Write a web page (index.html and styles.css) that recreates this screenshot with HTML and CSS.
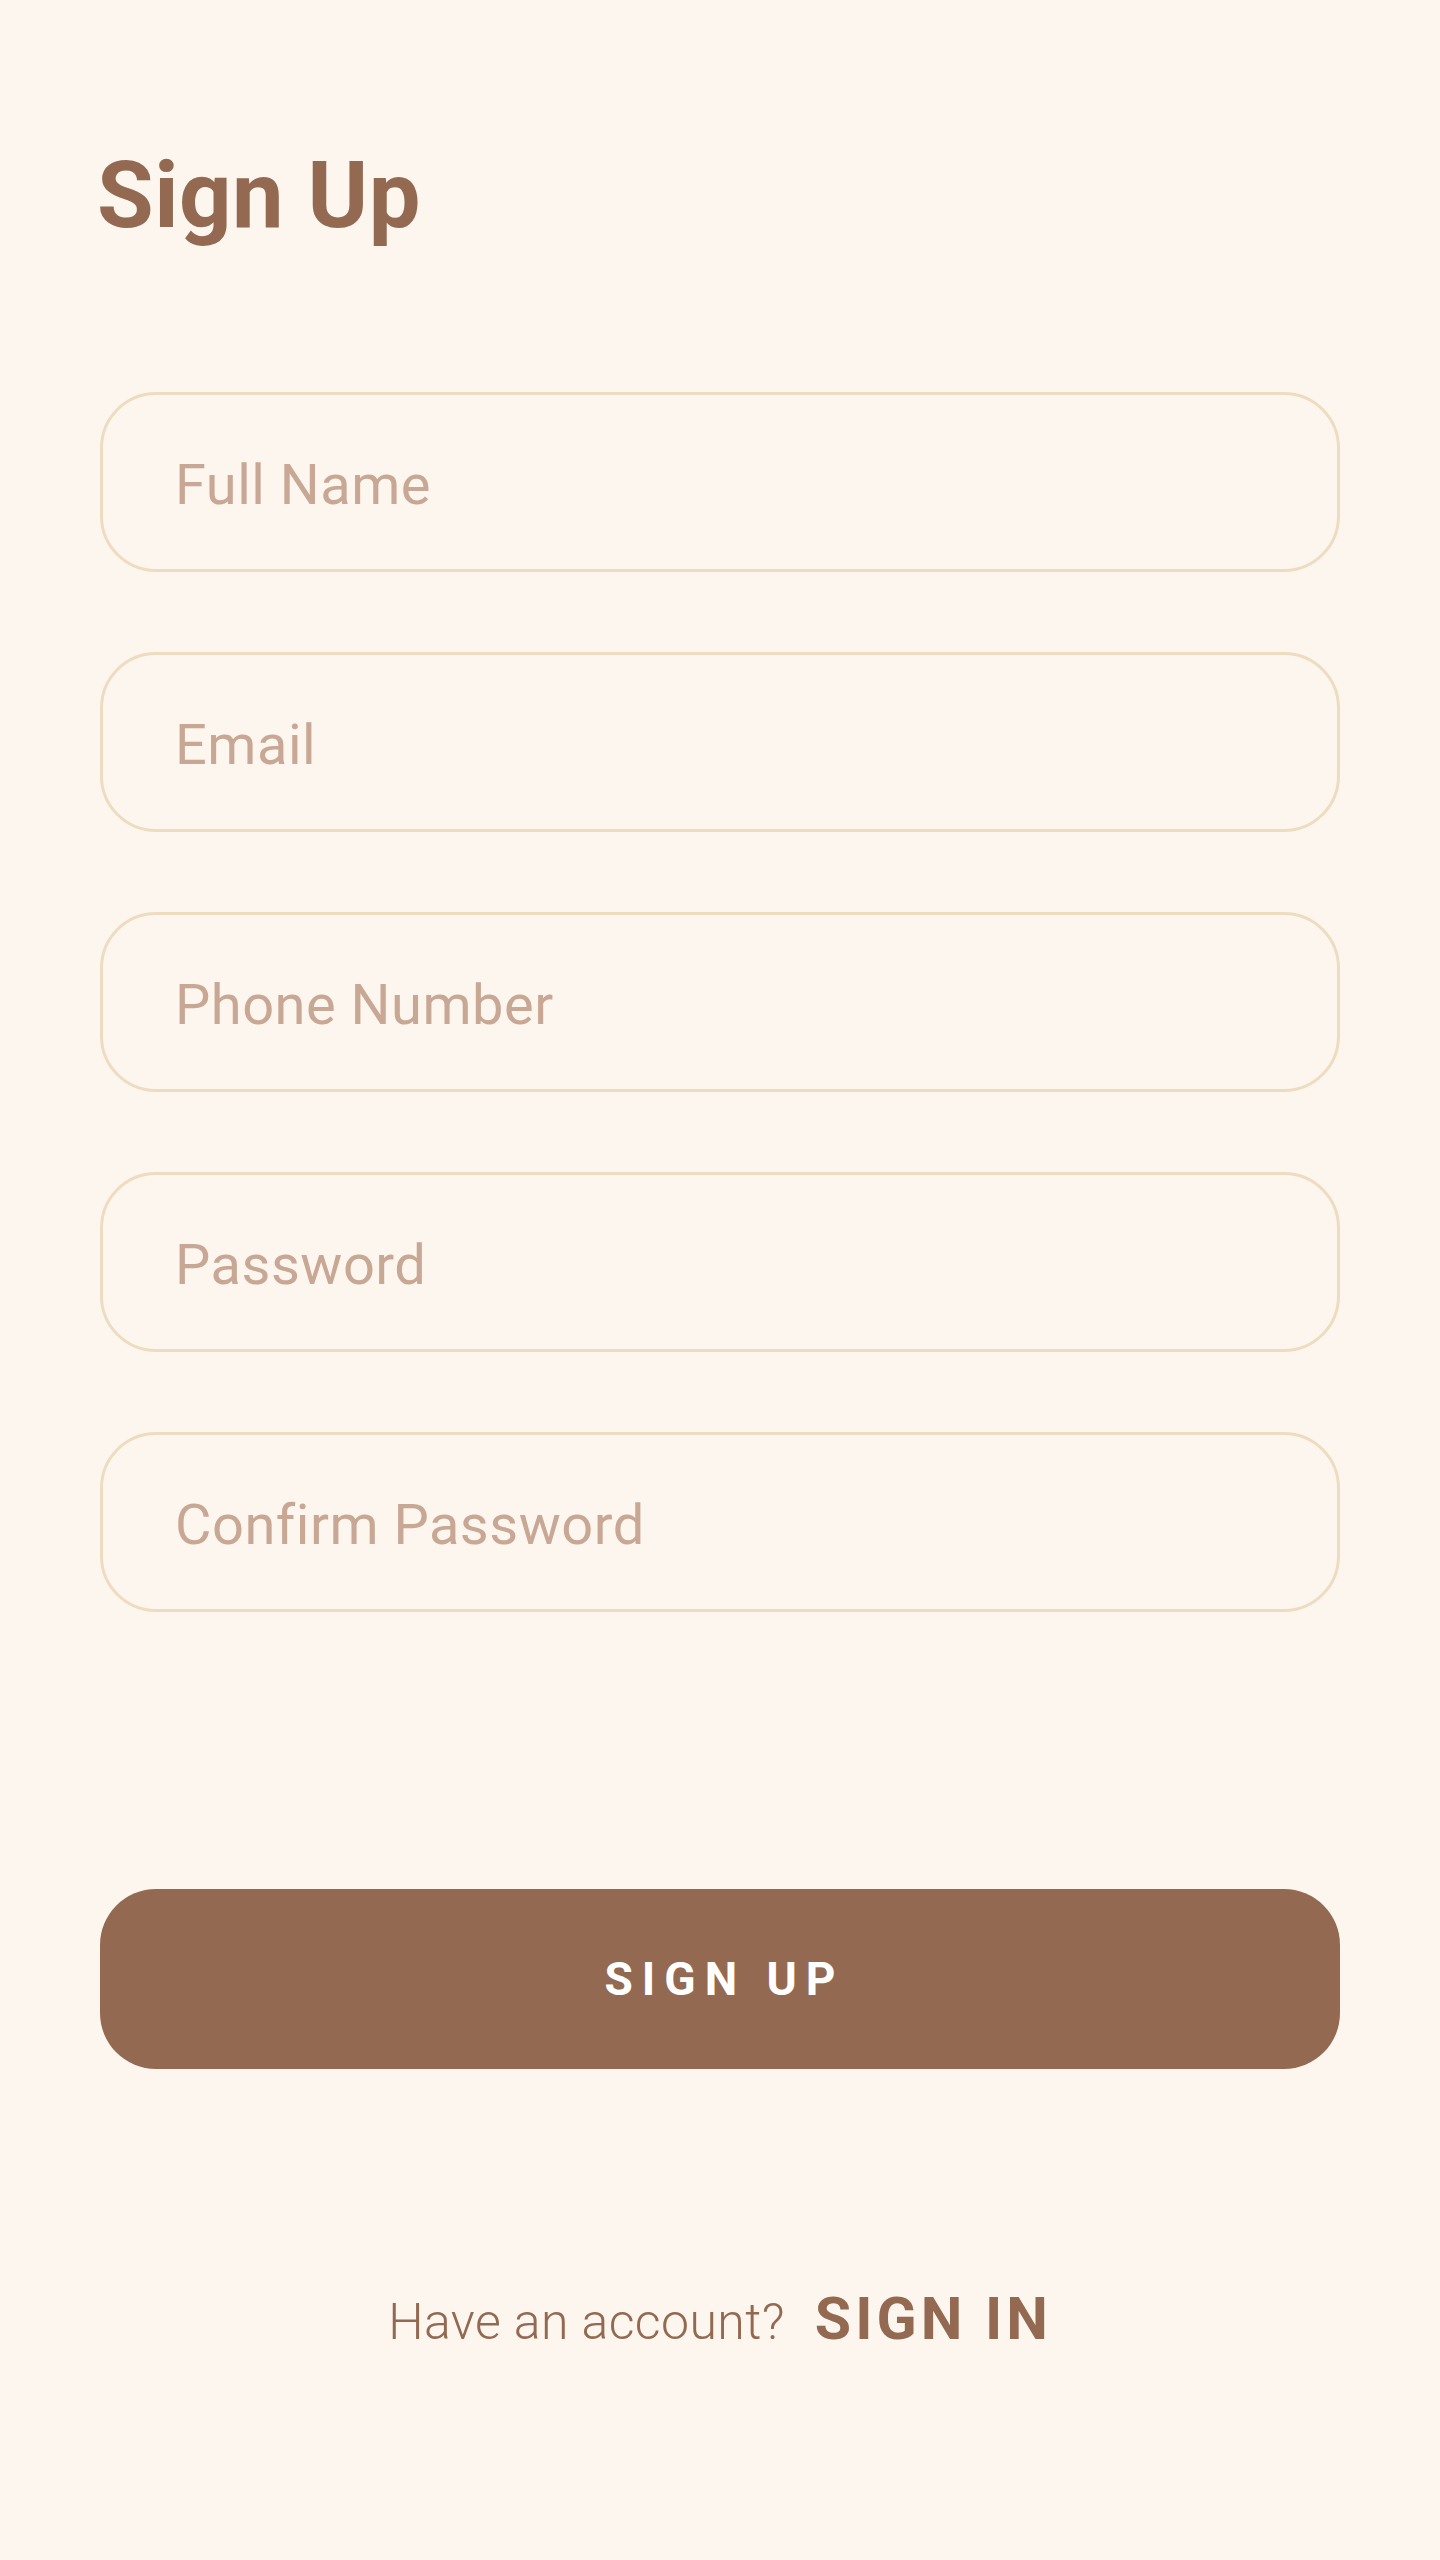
FILE: index.html
```html
<!DOCTYPE html>
<html lang="en">
<head>
<meta charset="utf-8">
<title>Sign Up</title>
<link rel="stylesheet" href="styles.css">
</head>
<body>
<main class="page">
  <h1 class="title">Sign Up</h1>
  <form class="form">
    <input class="field" type="text" placeholder="Full Name">
    <input class="field" type="email" placeholder="Email">
    <input class="field" type="tel" placeholder="Phone Number">
    <input class="field" type="password" placeholder="Password">
    <input class="field" type="password" placeholder="Confirm Password">
    <button class="submit" type="button">SIGN UP</button>
  </form>
  <p class="footer">
    <span class="footer-text">Have an account?</span>
    <a class="footer-link" href="#">SIGN IN</a>
  </p>
</main>
</body>
</html>
```

FILE: styles.css
```css
html, body {
  margin: 0;
  padding: 0;
  background: #fdf6ef;
}

body {
  font-family: Roboto, "Liberation Sans", sans-serif;
  min-height: 2560px;
}

.page {
  padding: 150px 100px 0;
  display: flex;
  flex-direction: column;
}

.title {
  margin: 0 0 0 -3px;
  font-size: 92px;
  line-height: 92px;
  font-weight: 700;
  letter-spacing: 0.5px;
  color: #936a51;
}

.form {
  margin-top: 150px;
  display: flex;
  flex-direction: column;
  gap: 80px;
}

.field {
  box-sizing: border-box;
  width: 100%;
  height: 180px;
  margin: 0;
  padding: 5px 72px 0;
  border: 3px solid #eedcc0;
  border-radius: 56px;
  background: transparent;
  font-family: Roboto, "Liberation Sans", sans-serif;
  font-size: 56px;
  font-weight: 400;
  letter-spacing: 0.5px;
  color: #936a51;
  outline: none;
}

.field::placeholder {
  color: #c8a895;
  opacity: 1;
}

.submit {
  box-sizing: border-box;
  width: 100%;
  height: 180px;
  margin-top: 197px;
  border: none;
  border-radius: 56px;
  background: #936a51;
  color: #ffffff;
  font-family: Roboto, "Liberation Sans", sans-serif;
  font-size: 46px;
  font-weight: 700;
  letter-spacing: 9px;
  padding: 0 0 0 9px;
  cursor: pointer;
}

.footer {
  margin: 0;
  padding-top: 220px;
  display: flex;
  justify-content: center;
  align-items: baseline;
  gap: 30px;
  line-height: 1;
}

.footer-text {
  font-size: 50px;
  font-weight: 300;
  color: #936a51;
  letter-spacing: 0.4px;
}

.footer-link {
  font-size: 59px;
  font-weight: 700;
  color: #936a51;
  letter-spacing: 4px;
  text-decoration: none;
}
```
